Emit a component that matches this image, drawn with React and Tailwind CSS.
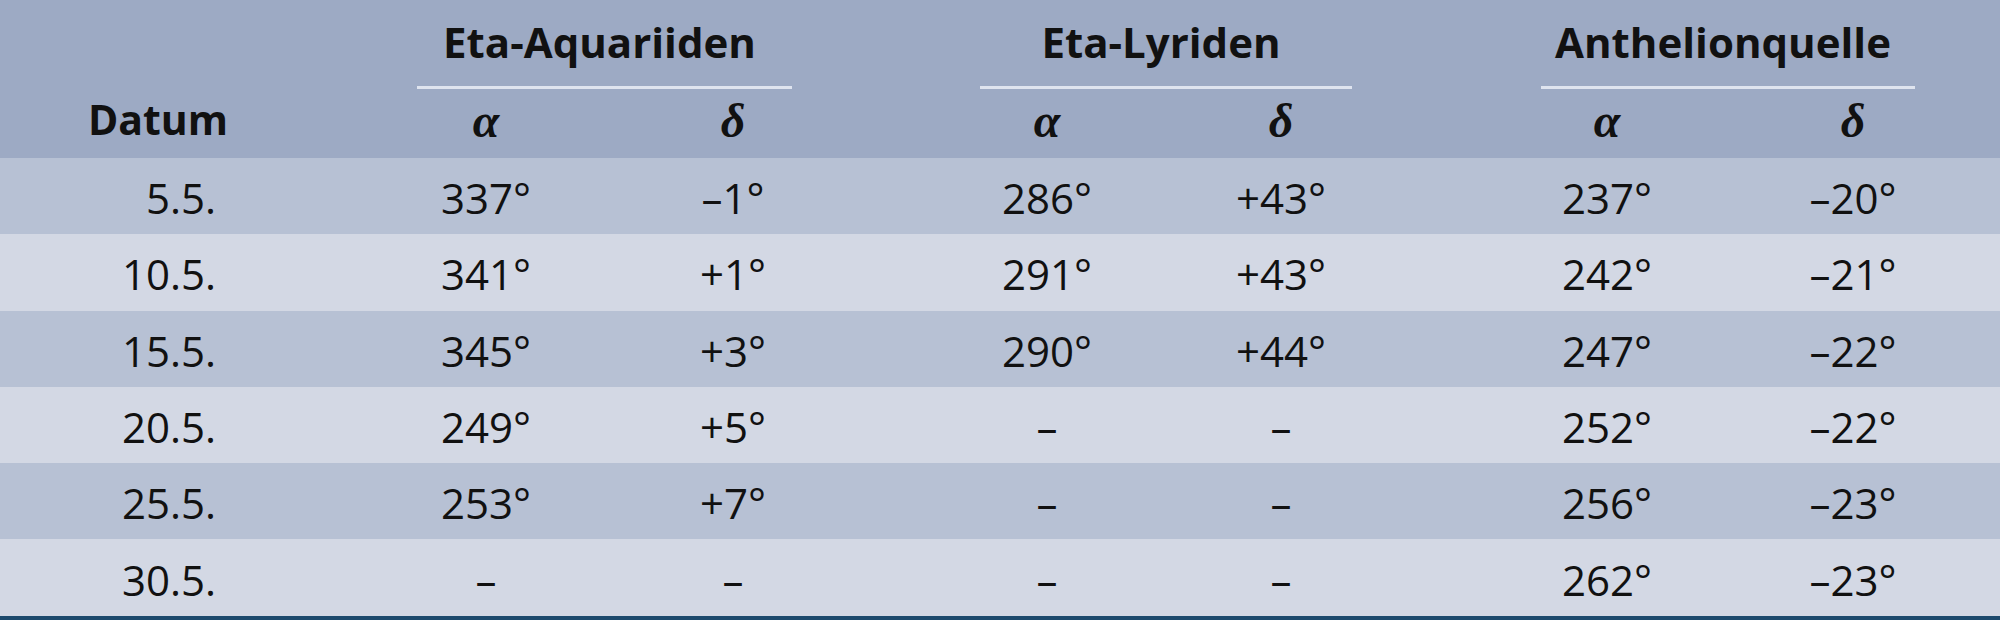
import React from 'react';

const GRID =
  'grid grid-cols-[396px_180px_67px_180px_134px_180px_54px_180px_146px_180px_66px_180px_1fr]';

const VALUE_COLS = ['col-start-2', 'col-start-4', 'col-start-6', 'col-start-8', 'col-start-10', 'col-start-12'];

const groups = [
  { name: 'Eta-Aquariiden', col: 'col-start-2', line: 'ml-[21px] mr-[31px]' },
  { name: 'Eta-Lyriden', col: 'col-start-6', line: 'ml-[23px] mr-[19px]' },
  { name: 'Anthelionquelle', col: 'col-start-10', line: 'ml-[24px] mr-[28px]' },
];

const rows = [
  ['5.5.', '337°', '–1°', '286°', '+43°', '237°', '–20°'],
  ['10.5.', '341°', '+1°', '291°', '+43°', '242°', '–21°'],
  ['15.5.', '345°', '+3°', '290°', '+44°', '247°', '–22°'],
  ['20.5.', '249°', '+5°', '–', '–', '252°', '–22°'],
  ['25.5.', '253°', '+7°', '–', '–', '256°', '–23°'],
  ['30.5.', '–', '–', '–', '–', '262°', '–23°'],
];

export default function App() {
  return (
    <div className="w-[2000px] h-[622px] bg-white font-['Open_Sans',sans-serif] text-[#111]">
      <div className="border-b-4 border-[#1d4a6d]">
        {/* header */}
        <div className={`${GRID} grid-rows-[89px_69px] bg-[#9daac4]`}>
          <div className="col-start-1 row-span-2 flex items-end justify-end pr-[168px] pb-[14px]">
            <span className="text-[41px] font-bold leading-[1.2]">Datum</span>
          </div>
          {groups.map((g) => (
            <div key={g.name} className={`${g.col} col-span-3 row-start-1 flex flex-col pt-[17px]`}>
              <div className={`${g.line} pr-[10px] text-center text-[42px] font-bold leading-[1.2]`}>{g.name}</div>
              <div className={`${g.line} mt-[19px] h-[3px] bg-[#dfe4ef]`} />
            </div>
          ))}
          {VALUE_COLS.map((c, i) => (
            <div
              key={c}
              className={`${c} row-start-2 pt-[8px] text-center font-['Liberation_Serif',serif] text-[48px] font-bold italic leading-none`}
            >
              {i % 2 === 0 ? 'α' : 'δ'}
            </div>
          ))}
        </div>

        {/* body */}
        {rows.map((r, idx) => (
          <div
            key={r[0]}
            className={`${GRID} h-[76.3px] items-center pt-[4px] text-[42px] leading-none ${
              idx % 2 === 0 ? 'bg-[#b7c1d4]' : 'bg-[#d3d8e4]'
            }`}
          >
            <div className="col-start-1 pr-[180px] text-right">{r[0]}</div>
            {r.slice(1).map((v, i) => (
              <div key={i} className={`${VALUE_COLS[i]} text-center`}>
                {v}
              </div>
            ))}
          </div>
        ))}
      </div>
    </div>
  );
}
